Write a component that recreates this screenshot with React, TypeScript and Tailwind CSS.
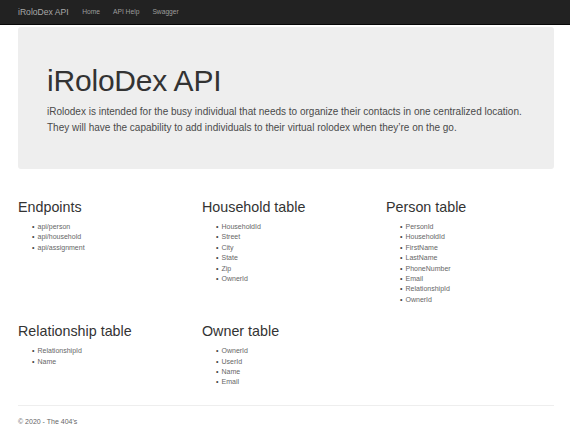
import React from "react";

const font = { fontFamily: '"Liberation Sans", Arial, Helvetica, sans-serif' };

function Col({ title, items }: { title: string; items: string[] }) {
  return (
    <div className="min-w-0">
      <h2 className="text-[14.3px] leading-[16.5px] font-normal text-[#333] mt-[18px]">{title}</h2>
      <ul className="pl-[14px] mt-[6.5px] text-[7px] leading-[10.4px] text-[#666]">
        {items.map((i) => (
          <li key={i} className="flex">
            <span className="w-[5.5px] shrink-0 text-[#444]">•</span>
            <span>{i}</span>
          </li>
        ))}
      </ul>
    </div>
  );
}

export default function App() {
  return (
    <div className="w-[570px] h-[435px] bg-white overflow-hidden" style={font}>
      <nav className="h-[25px] bg-[#222] border-b border-[#080808] flex items-center pl-[18px]">
        <span className="text-[8.6px] text-[#a8a8a8] mr-[7px]">iRoloDex API</span>
        <span className="text-[6.7px] text-[#9d9d9d] px-[6.5px]">Home</span>
        <span className="text-[6.7px] text-[#9d9d9d] px-[6.5px]">API Help</span>
        <span className="text-[6.7px] text-[#9d9d9d] px-[6.5px]">Swagger</span>
      </nav>
      <div className="ml-[18px] w-[536px] mt-[2px] h-[142px] bg-[#eee] rounded-[3px] px-[29px] pt-[37px]">
        <h1 className="text-[30px] leading-[33px] font-normal text-[#333] tracking-[-0.2px]">iRoloDex API</h1>
        <p className="mt-[7.4px] text-[10px] leading-[16px] text-[#4a4a4a] whitespace-nowrap">
          iRolodex is intended for the busy individual that needs to organize their contacts in one centralized location.
          <br />
          They will have the capability to add individuals to their virtual rolodex when they’re on the go.
        </p>
      </div>
      <div className="grid grid-cols-[184px_184px_184px] pl-[18px] mt-[12px]">
        <Col title="Endpoints" items={["api/person", "api/household", "api/assignment"]} />
        <Col title="Household table" items={["HouseholdId", "Street", "City", "State", "Zip", "OwnerId"]} />
        <Col
          title="Person table"
          items={["PersonId", "HouseholdId", "FirstName", "LastName", "PhoneNumber", "Email", "RelationshipId", "OwnerId"]}
        />
        <Col title="Relationship table" items={["RelationshipId", "Name"]} />
        <Col title="Owner table" items={["OwnerId", "UserId", "Name", "Email"]} />
      </div>
      <div className="ml-[18px] w-[536px] mt-[17px] border-t border-[#eee]" />
      <footer className="ml-[18px] mt-[11px] text-[7px] leading-[10.4px] text-[#666]">© 2020 - The 404's</footer>
    </div>
  );
}
